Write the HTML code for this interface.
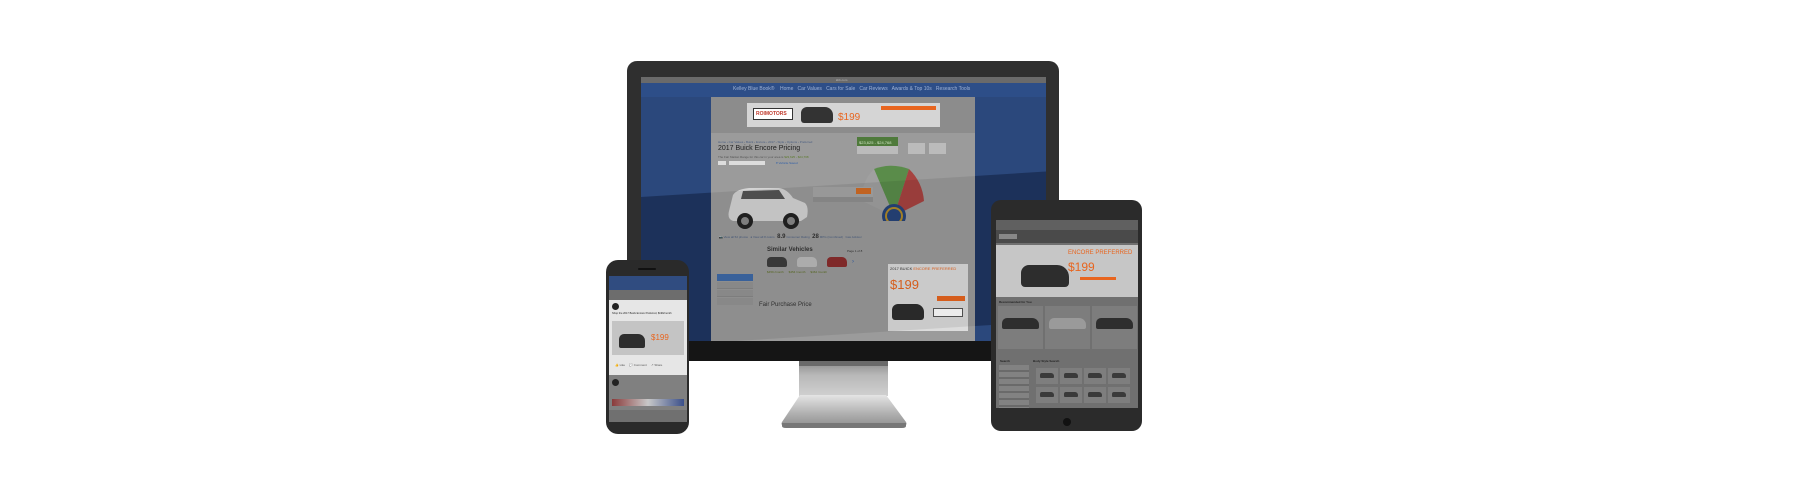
<!DOCTYPE html>
<html><head><meta charset="utf-8"><style>
*{margin:0;padding:0;box-sizing:border-box}
body{width:1800px;height:500px;background:#fff;position:relative;overflow:hidden;font-family:"Liberation Sans",sans-serif}
.a{position:absolute}
.t{position:absolute;font-size:4px;color:#4a5e80;white-space:nowrap}
.bs{position:absolute;width:22px;height:16px;background:#7e7e7e}
.bs i{position:absolute;left:4px;top:5px;width:14px;height:5px;background:#3a3a3a;border-radius:2px 3px 1px 1px}
</style></head><body>

<!-- MONITOR -->
<div class="a" style="left:627px;top:61px;width:432px;height:299px;background:#2f2f2f;border-radius:10px 10px 0 0"></div>
<div class="a" style="left:627px;top:341px;width:432px;height:20px;background:#151515"></div>
<!-- stand -->
<div class="a" style="left:799px;top:361px;width:89px;height:35px;background:linear-gradient(180deg,#8a8a8a,#b8b8b8 40%,#d0d0d0);"></div>
<div class="a" style="left:799px;top:361px;width:89px;height:5px;background:#6a6a6a"></div>
<svg class="a" style="left:778px;top:394px" width="132" height="36"><defs><linearGradient id="g" x1="0" y1="0" x2="0" y2="1"><stop offset="0" stop-color="#e4e4e4"/><stop offset="0.6" stop-color="#b0b0b0"/><stop offset="1" stop-color="#909090"/></linearGradient></defs><path d="M22 1 H108 L128 28 Q130 32 124 32 H8 Q2 32 4 28 Z" fill="url(#g)"/><path d="M4 29 H128 V32 Q128 34 124 34 H8 Q4 34 4 32Z" fill="#777"/></svg>

<!-- screen -->
<div class="a" style="left:641px;top:77px;width:405px;height:264px;background:#2b487c;overflow:hidden">
  <div class="a" style="left:0;top:0;width:405px;height:6px;background:#6a6a6a"></div>
  <div class="t" style="left:195px;top:1px;font-size:3px;color:#bbb">kbb.com</div>
  <div class="a" style="left:0;top:6px;width:405px;height:14px;background:#2d4e88"></div>
  <div class="t" style="left:92px;top:9px;font-size:5px;color:#9fb3d6">Kelley Blue Book® &nbsp;&nbsp; Home &nbsp; Car Values &nbsp; Cars for Sale &nbsp; Car Reviews &nbsp; Awards &amp; Top 10s &nbsp; Research Tools</div>
  <div class="a" style="left:0;top:120px;width:405px;height:150px;background:#1f3662;transform:skewY(-3.6deg);transform-origin:0 0"></div>
  <!-- content -->
  <div class="a" style="left:70px;top:20px;width:264px;height:244px;background:#9b9b9b">
    <div class="a" style="left:0;top:0;width:264px;height:36px;background:#8c8c8c"></div>
    <div class="a" style="left:36px;top:6px;width:193px;height:24px;background:#d5d5d5"></div>
    <div class="a" style="left:42px;top:11px;width:40px;height:12px;background:#fff;border:1px solid #333"></div>
    <div class="t" style="left:45px;top:14px;font-size:5px;font-weight:bold;color:#c0392b">ROIMOTORS</div>
    <div class="a" style="left:90px;top:10px;width:32px;height:16px;background:#333;border-radius:6px 8px 3px 3px"></div>
    <div class="t" style="left:127px;top:15px;font-size:10px;color:#e8651f">$199</div>
    <div class="a" style="left:170px;top:9px;width:32px;height:4px;background:#e8651f"></div>
    <div class="a" style="left:201px;top:9px;width:24px;height:4px;background:#e8651f"></div>
    <div class="t" style="left:7px;top:43px;font-size:3px">Home › Car Values › Buick › Encore › 2017 › Style › Options › Preferred</div>
    <div class="t" style="left:7px;top:48px;font-size:7px;color:#222">2017 Buick Encore Pricing</div>
    <div class="t" style="left:7px;top:58px;font-size:3px;color:#555">The Fair Market Range for this car in your area is <span style="color:#5b7a2a">$23,625 - $24,768</span></div>
    <div class="a" style="left:7px;top:64px;width:8px;height:4px;background:#ddd"></div>
    <div class="a" style="left:18px;top:64px;width:36px;height:4px;background:#ddd"></div>
    <div class="t" style="left:65px;top:64px;font-size:3px;color:#2f5fa8">♥ Vehicle Saved</div>
    <div class="a" style="left:146px;top:40px;width:41px;height:9px;background:#4f7a3b"></div>
    <div class="t" style="left:148px;top:43px;font-size:4px;color:#cfe5c2">$23,625 - $24,768</div>
    <div class="a" style="left:146px;top:49px;width:41px;height:8px;background:#bbb"></div>
    <div class="a" style="left:197px;top:46px;width:17px;height:11px;background:#bbb"></div>
    <div class="a" style="left:218px;top:46px;width:17px;height:11px;background:#bbb"></div>
    <svg class="a" style="left:148px;top:64px" width="70" height="60"><path d="M35 55 L15 8 A50 50 0 0 1 50 8Z" fill="#5a8c4a"/><path d="M35 55 L50 8 A50 50 0 0 1 65 40Z" fill="#a93a36" opacity=".9"/><path d="M35 55 L3 40 A40 40 0 0 1 15 8Z" fill="#a0a0a0"/><circle cx="35" cy="55" r="12" fill="#27447a"/><circle cx="35" cy="55" r="9" fill="#b08a2a"/><circle cx="35" cy="55" r="7" fill="#27447a"/></svg>
    <!-- car -->
    <svg class="a" style="left:10px;top:86px" width="90" height="50"><path d="M8 28 L12 12 Q16 6 28 5 L58 5 Q66 6 72 15 L84 20 Q88 24 86 34 L80 38 H12 Q6 36 8 28Z" fill="#d4d4d4"/><path d="M22 8 L58 7 L64 16 L20 16Z" fill="#555"/><circle cx="24" cy="38" r="8" fill="#222"/><circle cx="24" cy="38" r="4" fill="#888"/><circle cx="70" cy="38" r="8" fill="#222"/><circle cx="70" cy="38" r="4" fill="#888"/></svg>
    <div class="a" style="left:102px;top:90px;width:60px;height:10px;background:#a5a5a5"></div>
    <div class="a" style="left:145px;top:91px;width:15px;height:6px;background:#d26c24"></div>
    <div class="a" style="left:102px;top:100px;width:60px;height:5px;background:#909090"></div>
    <div class="t" style="left:8px;top:137px;font-size:3px">📷 View all 52 photos &nbsp; ● View all 8 colors &nbsp; <b style="font-size:6px;color:#333">8.9</b> Consumer Rating &nbsp; <b style="font-size:6px;color:#333">28</b> MPG (Combined) &nbsp; Gas Advisor</div>
    <div class="t" style="left:56px;top:150px;font-size:6px;color:#333;font-weight:bold">Similar Vehicles</div>
    <div class="t" style="left:136px;top:152px;font-size:3px;color:#333">Page 1 of 8</div>
    <div class="a" style="left:56px;top:160px;width:20px;height:10px;background:#3d3d3d;border-radius:4px 5px 2px 2px"></div>
    <div class="a" style="left:86px;top:160px;width:20px;height:10px;background:#bbb;border-radius:4px 5px 2px 2px"></div>
    <div class="a" style="left:116px;top:160px;width:20px;height:10px;background:#8a2d2d;border-radius:4px 5px 2px 2px"></div>
    <div class="t" style="left:56px;top:173px;font-size:3px;color:#5b6e20">$459 /month &nbsp;&nbsp;&nbsp;&nbsp; $454 /month &nbsp;&nbsp;&nbsp;&nbsp; $464 /month</div>
    <div class="t" style="left:141px;top:162px;font-size:6px;color:#2f5fa8">›</div>
    <div class="a" style="left:6px;top:177px;width:36px;height:7px;background:#3e6aa8"></div>
    <div class="a" style="left:6px;top:185px;width:36px;height:7px;background:#949494;border-bottom:1px solid #888"></div>
    <div class="a" style="left:6px;top:193px;width:36px;height:7px;background:#949494;border-bottom:1px solid #888"></div>
    <div class="a" style="left:6px;top:201px;width:36px;height:7px;background:#949494"></div>
    <div class="t" style="left:48px;top:205px;font-size:6px;color:#333">Fair Purchase Price</div>
    <!-- side ad -->
    <div class="a" style="left:177px;top:167px;width:80px;height:67px;background:#dcdcdc"></div>
    <div class="t" style="left:179px;top:169px;font-size:4px;color:#333">2017 BUICK <span style="color:#e8651f">ENCORE PREFERRED</span></div>
    <div class="t" style="left:179px;top:180px;font-size:13px;color:#e8651f">$199</div>
    <div class="a" style="left:226px;top:199px;width:28px;height:5px;background:#e8651f"></div>
    <div class="a" style="left:181px;top:207px;width:32px;height:16px;background:#2d2d2d;border-radius:6px 8px 3px 3px"></div>
    <div class="a" style="left:222px;top:211px;width:30px;height:9px;background:#fff;border:1px solid #555"></div>
  </div>
  <div class="a" style="left:0;top:120px;width:405px;height:150px;background:rgba(0,0,0,.08);transform:skewY(-3.6deg);transform-origin:0 0"></div>
</div>

<!-- PHONE -->
<div class="a" style="left:606px;top:260px;width:83px;height:174px;background:#2a2a2a;border-radius:12px"></div>
<div class="a" style="left:638px;top:268px;width:18px;height:2px;background:#111;border-radius:1px"></div>
<div class="a" style="left:609px;top:276px;width:78px;height:146px;background:#808080;overflow:hidden">
  <div class="a" style="left:0;top:0;width:78px;height:14px;background:#304c80"></div>
  <div class="a" style="left:0;top:14px;width:78px;height:10px;background:#6d6d6d"></div>
  <div class="a" style="left:0;top:24px;width:78px;height:75px;background:#e6e6e6"></div>
  <div class="a" style="left:3px;top:27px;width:7px;height:7px;border-radius:50%;background:#222"></div>
  <div class="t" style="left:3px;top:36px;font-size:2.6px;color:#222">Shop the 2017 Buick Encore Preferred, $199/month</div>
  <div class="a" style="left:3px;top:45px;width:72px;height:34px;background:#c4c4c4"></div>
  <div class="a" style="left:10px;top:58px;width:26px;height:14px;background:#2d2d2d;border-radius:5px 7px 2px 2px"></div>
  <div class="t" style="left:42px;top:57px;font-size:8px;color:#e8651f">$199</div>
  <div class="t" style="left:6px;top:87px;font-size:3px;color:#555">👍 Like &nbsp;&nbsp;&nbsp; 💬 Comment &nbsp;&nbsp;&nbsp; ↗ Share</div>
  <div class="a" style="left:3px;top:103px;width:7px;height:7px;border-radius:50%;background:#222"></div>
  <div class="a" style="left:3px;top:123px;width:72px;height:7px;background:linear-gradient(90deg,#8a3a3a,#c8c8c8,#3a4f8a)"></div>
  <div class="a" style="left:0;top:134px;width:78px;height:12px;background:#707070"></div>
</div>

<!-- TABLET -->
<div class="a" style="left:991px;top:200px;width:151px;height:231px;background:#2b2b2b;border-radius:10px"></div>
<div class="a" style="left:1063px;top:418px;width:8px;height:8px;border-radius:50%;background:#111"></div>
<div class="a" style="left:996px;top:220px;width:142px;height:188px;background:#707070;overflow:hidden">
  <div class="a" style="left:0;top:0;width:142px;height:10px;background:#606060"></div>
  <div class="a" style="left:0;top:10px;width:142px;height:13px;background:#4a4a4a"></div>
  <div class="a" style="left:3px;top:14px;width:18px;height:5px;background:#888"></div>
  <div class="a" style="left:0;top:25px;width:142px;height:52px;background:#c6c6c6"></div>
  <div class="a" style="left:25px;top:45px;width:48px;height:22px;background:#2d2d2d;border-radius:8px 12px 4px 4px"></div>
  <div class="t" style="left:72px;top:30px;font-size:6px;color:#e8651f">ENCORE PREFERRED</div>
  <div class="t" style="left:72px;top:40px;font-size:12px;color:#e8651f">$199</div>
  <div class="a" style="left:84px;top:57px;width:36px;height:3px;background:#e8651f"></div>
  <div class="t" style="left:3px;top:80px;font-size:3px;color:#222;font-weight:bold">Recommended for You</div>
  <div class="a" style="left:2px;top:86px;width:45px;height:43px;background:#7d7d7d"></div>
  <div class="a" style="left:49px;top:86px;width:45px;height:43px;background:#7d7d7d"></div>
  <div class="a" style="left:96px;top:86px;width:45px;height:43px;background:#7d7d7d"></div>
  <div class="a" style="left:6px;top:98px;width:37px;height:11px;background:#2e2e2e;border-radius:5px 7px 2px 2px"></div>
  <div class="a" style="left:53px;top:98px;width:37px;height:11px;background:#9a9a9a;border-radius:5px 7px 2px 2px"></div>
  <div class="a" style="left:100px;top:98px;width:37px;height:11px;background:#2e2e2e;border-radius:5px 7px 2px 2px"></div>
  <div class="t" style="left:4px;top:139px;font-size:3px;color:#222;font-weight:bold">Search</div>
  <div class="t" style="left:37px;top:139px;font-size:3px;color:#222;font-weight:bold">Body Style Search</div>
  <div class="a" style="left:3px;top:145px;width:30px;height:43px;background:repeating-linear-gradient(#828282 0 5px,#6a6a6a 5px 7px)"></div>
  <div class="bs" style="left:40px;top:148px"><i></i></div>
  <div class="bs" style="left:64px;top:148px"><i></i></div>
  <div class="bs" style="left:88px;top:148px"><i></i></div>
  <div class="bs" style="left:112px;top:148px"><i></i></div>
  <div class="bs" style="left:40px;top:167px"><i></i></div>
  <div class="bs" style="left:64px;top:167px"><i></i></div>
  <div class="bs" style="left:88px;top:167px"><i></i></div>
  <div class="bs" style="left:112px;top:167px"><i></i></div>
</div>
</body></html>
